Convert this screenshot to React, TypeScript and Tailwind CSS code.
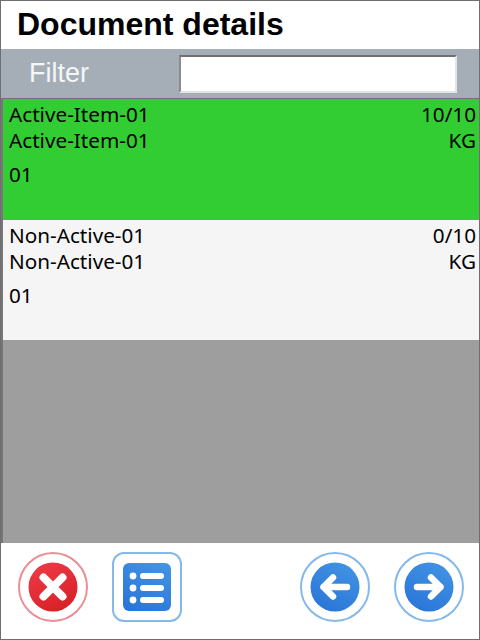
const rows = [
  { name: "Active-Item-01", qty: "10/10", bg: "bg-[#32cd32]", height: "h-[121px]" },
  { name: "Non-Active-01", qty: "0/10", bg: "bg-[#f5f5f5]", height: "h-[120px]" },
];

function RoundButton({ children, className = "rounded-full", color = "border-[#85b9ea]" }: { children: React.ReactNode; className?: string; color?: string }) {
  return (
    <button className={`w-[70px] h-[70px] border-2 flex items-center justify-center bg-white ${className} ${color}`}>
      {children}
    </button>
  );
}

export default function App() {
  return (
    <div className="w-[480px] h-[640px] flex flex-col bg-white border border-[#6e6e6e] font-['Liberation_Sans',sans-serif] overflow-hidden">
      {/* Header */}
      <div className="h-[48px] shrink-0 pl-4 pb-[2px] flex items-center">
        <h1 className="text-[32px] leading-none font-bold text-black">Document details</h1>
      </div>

      {/* Filter */}
      <div className="h-[49px] shrink-0 bg-[#a5aeb6] flex items-center pl-[28px] pr-[22px] justify-between">
        <span className="text-[27px] text-[#f4f6f8]">Filter</span>
        <input className="w-[278px] h-[38px] bg-white border-t-2 border-l-2 border-t-[#6e6e6e] border-l-[#8a8a8a] border-b-2 border-r-2 border-b-[#e4e4e4] border-r-[#e4e4e4]" />
      </div>

      {/* List */}
      <div className="flex-1 flex flex-col bg-[#9e9e9e] border-t border-t-[#6f7274] border-l-2 border-l-[#777777] font-['Noto_Sans',sans-serif] text-[20.7px] leading-[26px] text-black">
        {rows.map((row) => (
          <div key={row.name} className={`shrink-0 pl-[6px] pt-[2px] pr-[3px] ${row.height} ${row.bg}`}>
            <div className="flex justify-between">
              <span>{row.name}</span>
              <span>{row.qty}</span>
            </div>
            <div className="flex justify-between">
              <span>{row.name}</span>
              <span>KG</span>
            </div>
            <div className="mt-[8px]">01</div>
          </div>
        ))}
      </div>

      {/* Footer */}
      <div className="h-[96px] shrink-0 flex pl-[17px] pr-[15px] pt-[9px]">
        <RoundButton color="border-[#e98f96]">
          <svg width="50" height="50" viewBox="0 0 50 50">
            <defs>
              <linearGradient id="red" x1="0.2" y1="0" x2="0.7" y2="1">
                <stop offset="0" stopColor="#ee3a46" />
                <stop offset="1" stopColor="#d81f26" />
              </linearGradient>
            </defs>
            <circle cx="25" cy="25" r="24.5" fill="url(#red)" />
            <path d="M15.5 15.5 L34.5 34.5 M34.5 15.5 L15.5 34.5" stroke="#fff" strokeWidth="8" strokeLinecap="round" />
          </svg>
        </RoundButton>
        <RoundButton className="rounded-[12px] ml-[24px]">
          <svg width="48" height="48" viewBox="0 0 48 48">
            <defs>
              <linearGradient id="blue1" x1="0.8" y1="0" x2="0.3" y2="1">
                <stop offset="0" stopColor="#4293e4" />
                <stop offset="1" stopColor="#2a76d8" />
              </linearGradient>
            </defs>
            <rect width="48" height="48" rx="6" fill="url(#blue1)" />
            <circle cx="10" cy="13" r="3.4" fill="#fff" />
            <circle cx="10" cy="25" r="3.4" fill="#fff" />
            <circle cx="10" cy="37" r="3.4" fill="#fff" />
            <path d="M20 13 H38 M20 25 H38 M20 37 H38" stroke="#fff" strokeWidth="6" strokeLinecap="round" />
          </svg>
        </RoundButton>
        <div className="ml-auto flex gap-[24px]">
          <RoundButton>
            <svg width="50" height="50" viewBox="0 0 50 50">
              <defs>
                <linearGradient id="blue2" x1="0.8" y1="0" x2="0.3" y2="1">
                  <stop offset="0" stopColor="#4293e4" />
                  <stop offset="1" stopColor="#2a76d8" />
                </linearGradient>
              </defs>
              <circle cx="25" cy="25" r="24.5" fill="url(#blue2)" />
              <path d="M37 25 H13.5 M23 15.5 L13.5 25 L23 34.5" fill="none" stroke="#fff" strokeWidth="6.5" strokeLinecap="round" strokeLinejoin="round" />
            </svg>
          </RoundButton>
          <RoundButton>
            <svg width="50" height="50" viewBox="0 0 50 50">
              <defs>
                <linearGradient id="blue3" x1="0.8" y1="0" x2="0.3" y2="1">
                  <stop offset="0" stopColor="#4293e4" />
                  <stop offset="1" stopColor="#2a76d8" />
                </linearGradient>
              </defs>
              <circle cx="25" cy="25" r="24.5" fill="url(#blue3)" />
              <path d="M13 25 H36.5 M27 15.5 L36.5 25 L27 34.5" fill="none" stroke="#fff" strokeWidth="6.5" strokeLinecap="round" strokeLinejoin="round" />
            </svg>
          </RoundButton>
        </div>
      </div>
    </div>
  );
}
